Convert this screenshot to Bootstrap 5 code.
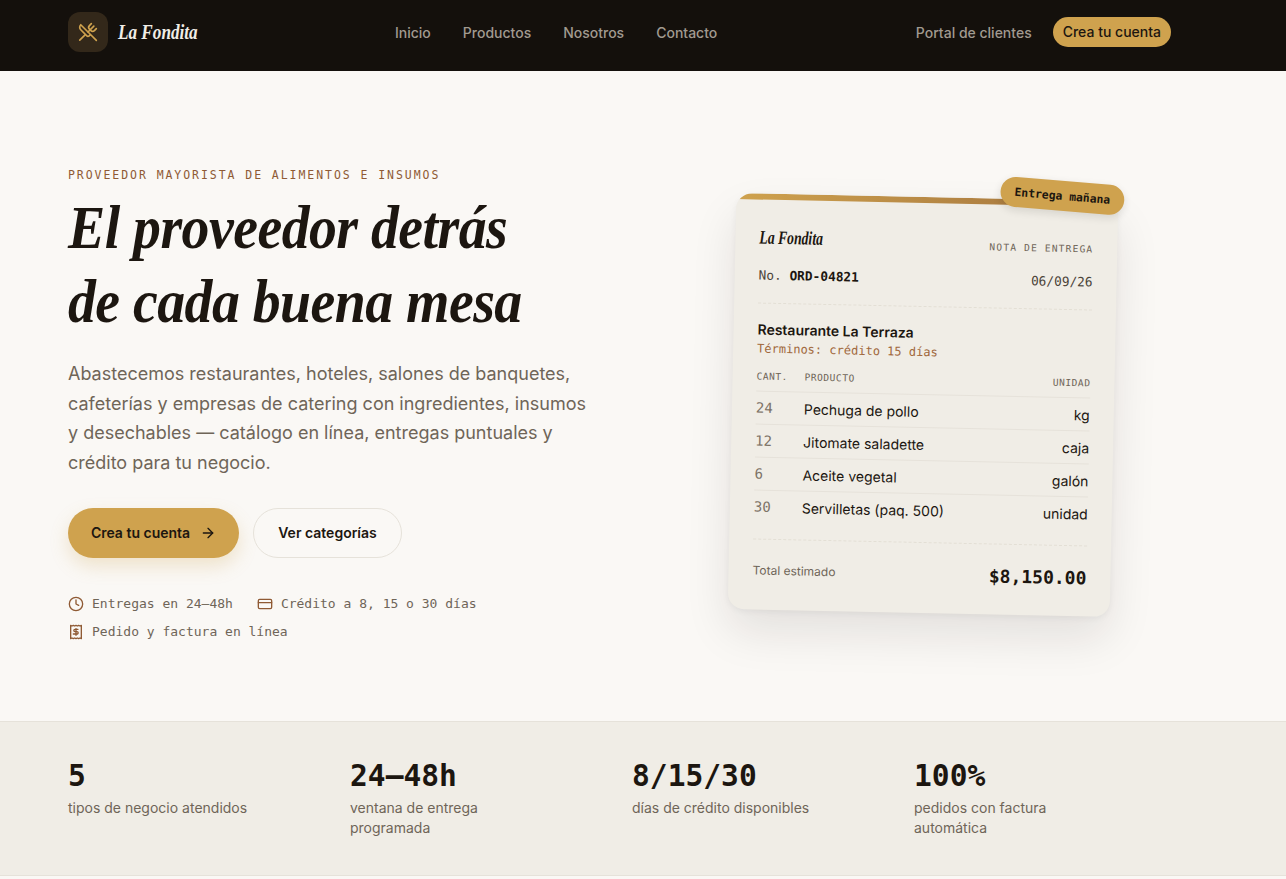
<!doctype html>
<html lang="es">
<head>
<meta charset="utf-8">
<link href="https://cdn.jsdelivr.net/npm/bootstrap@5.3.0/dist/css/bootstrap.min.css" rel="stylesheet">
<style>
body{background:#faf8f5;color:#1c1610;font-family:Inter,"Liberation Sans",sans-serif;}
.hand{font-family:"Liberation Serif",serif;font-style:italic;font-weight:700;display:inline-block;transform-origin:left center;}
.mono{font-family:"DejaVu Sans Mono","Liberation Mono",monospace;}
.topbar{background:#14100c;height:71px;padding:0 115px 7px 68px;}
.logo-box{width:40px;height:40px;border-radius:12px;background:#33281a;color:#cfa24e;}
.logo-name{color:#f0ede6;font-size:22px;line-height:1;margin-left:10px;transform:scaleX(.78);width:78px;white-space:nowrap;}
.top-links{gap:32px;margin-left:199px;}
.top-links a{color:#a19a90;font-size:14px;font-weight:500;text-decoration:none;}
.portal{color:#a19a90;font-size:14px;font-weight:500;text-decoration:none;}
.pill-small{background:#cfa24e;color:#1c1610;font-size:14px;font-weight:500;border-radius:15px;padding:0 10px;height:30px;line-height:30px;margin-left:21px;text-decoration:none;}
.hero-wrap{height:650px;padding-left:68px;position:relative;}
.hero-left{width:560px;padding-top:96px;}
.eyebrow{font-size:11.5px;letter-spacing:1.94px;color:#8f5a34;line-height:16px;margin:0;}
.hero-title{display:block;font-size:62px;line-height:74px;margin:7px 0 0;letter-spacing:-.6px;white-space:nowrap;transform:scaleX(.9);}
.hero-text{font-size:18px;line-height:29.7px;color:#6f6558;margin:21px 0 0;width:530px;}
.cta{background:#cfa24e;color:#1c1610;font-size:14px;font-weight:600;border-radius:25px;height:50px;width:171px;box-shadow:0 8px 18px rgba(207,162,78,.25);text-decoration:none;gap:10px;}
.ghost{color:#1c1610;border:1px solid #e6e2da;font-size:14px;font-weight:600;border-radius:25px;height:50px;width:149px;text-decoration:none;}
.cta-row{gap:14px;margin-top:30px;}
.facts{font-size:13px;color:#6f6558;margin-top:36px;row-gap:8px;column-gap:24px;width:500px;line-height:20px;}
.facts span.fi{gap:8px;}
.facts svg{color:#8f5a34;}
.note{position:absolute;left:732px;top:126px;width:382px;height:416px;background:#f0ede6;border-radius:16px;transform:rotate(1.2deg);box-shadow:0 22px 45px rgba(28,22,16,.1),0 2px 6px rgba(28,22,16,.05);padding:32px 24px 0;}
.note-stripe{position:absolute;left:0;right:0;top:0;height:16px;border-radius:16px 16px 0 0;border-top:6px solid transparent;border-image:linear-gradient(90deg,#cfa24e,#a0703c) 1;clip-path:inset(0 round 16px 16px 0 0);}
.stamp{position:absolute;right:-6px;top:-19px;transform:rotate(3.6deg);background:#cfa24e;color:#1c1610;font-size:11.4px;font-weight:700;border-radius:15px;padding:7.5px 14px;line-height:15px;box-shadow:0 3px 8px rgba(28,22,16,.12);}
.note-brand{font-size:19px;line-height:24px;transform:scaleX(.72);white-space:nowrap;width:66px;}
.note-kind{font-size:9.6px;letter-spacing:1.15px;color:#6f6558;}
.note-no{font-size:12.8px;color:#4b4338;margin-top:16px;}
.note-no b{color:#1c1610;font-weight:700;}
.note-sep{border-top:1px dashed #e3dfd5;margin:18px 0 0;}
.client{font-size:14px;font-weight:600;margin-top:16px;line-height:20px;}
.terms{font-size:12px;color:#a0683c;line-height:18px;}
.cols{font-size:9.6px;letter-spacing:.5px;color:#6f6558;margin-top:12px;height:21px;}
.col-q{width:48px;}
.line-row{height:33px;border-top:1px solid #e6e2da;font-size:14px;align-items:center;}
.line-row .col-q{font-size:14px;color:#7d7366;}
.total-lbl{font-size:12px;color:#6f6558;}
.total-val{font-size:18px;font-weight:700;margin-top:2px;}
.stats{background:#f0ede6;border-top:1px solid #e6e2da;border-bottom:1px solid #e6e2da;height:155px;padding:34px 0 0 68px;display:grid;grid-template-columns:repeat(4,282px);}
.stat-num{font-size:29.6px;line-height:40px;font-weight:700;margin-bottom:2px;}
.stat-txt{font-size:14px;line-height:20px;color:#6f6558;width:190px;}
</style>
</head>
<body>
<nav class="topbar d-flex align-items-center">
  <div class="logo-box d-flex align-items-center justify-content-center">
    <svg width="20" height="20" viewBox="0 0 24 24" fill="none" stroke="currentColor" stroke-width="2" stroke-linecap="round" stroke-linejoin="round"><path d="m16 2-2.3 2.3a3 3 0 0 0 0 4.2l1.8 1.8a3 3 0 0 0 4.2 0L22 8"/><path d="M15 15 3.3 3.3a4.2 4.2 0 0 0 0 6l7.3 7.3c.7.7 2 .7 2.8 0L15 15Zm0 0 7 7"/><path d="m2.1 21.8 6.4-6.3"/><path d="m19 5-7 7"/></svg>
  </div>
  <span class="hand logo-name">La Fondita</span>
  <div class="top-links d-flex"><a href="#">Inicio</a><a href="#">Productos</a><a href="#">Nosotros</a><a href="#">Contacto</a></div>
  <a class="portal ms-auto" href="#">Portal de clientes</a>
  <a class="pill-small" href="#">Crea tu cuenta</a>
</nav>
<main class="hero-wrap">
  <div class="hero-left">
    <p class="eyebrow mono">PROVEEDOR MAYORISTA DE ALIMENTOS E INSUMOS</p>
    <h1 class="hero-title hand">El proveedor detrás<br>de cada buena mesa</h1>
    <p class="hero-text">Abastecemos restaurantes, hoteles, salones de banquetes, cafeterías y empresas de catering con ingredientes, insumos y desechables — catálogo en línea, entregas puntuales y crédito para tu negocio.</p>
    <div class="cta-row d-flex">
      <a class="cta d-flex align-items-center justify-content-center" href="#">Crea tu cuenta
        <svg width="16" height="16" viewBox="0 0 24 24" fill="none" stroke="currentColor" stroke-width="2" stroke-linecap="round" stroke-linejoin="round"><path d="M5 12h14"/><path d="m12 5 7 7-7 7"/></svg></a>
      <a class="ghost d-flex align-items-center justify-content-center" href="#">Ver categorías</a>
    </div>
    <div class="facts mono d-flex flex-wrap">
      <span class="fi d-flex align-items-center"><svg width="16" height="16" viewBox="0 0 24 24" fill="none" stroke="currentColor" stroke-width="2" stroke-linecap="round" stroke-linejoin="round"><circle cx="12" cy="12" r="10"/><path d="M12 6v6l4 2"/></svg>Entregas en 24–48h</span>
      <span class="fi d-flex align-items-center"><svg width="16" height="16" viewBox="0 0 24 24" fill="none" stroke="currentColor" stroke-width="2" stroke-linecap="round" stroke-linejoin="round"><rect x="2" y="5" width="20" height="14" rx="2"/><path d="M2 10h20"/></svg>Crédito a 8, 15 o 30 días</span>
      <span class="fi d-flex align-items-center w-100"><svg width="16" height="16" viewBox="0 0 24 24" fill="none" stroke="currentColor" stroke-width="2" stroke-linecap="round" stroke-linejoin="round"><path d="M4 2v20l2-1 2 1 2-1 2 1 2-1 2 1 2-1 2 1V2l-2 1-2-1-2 1-2-1-2 1-2-1-2 1Z"/><path d="M15 8h-4.5a1.75 1.75 0 0 0 0 3.5h3a1.75 1.75 0 0 1 0 3.5H8"/><path d="M12 17V7"/></svg>Pedido y factura en línea</span>
    </div>
  </div>
  <section class="note">
    <div class="note-stripe"></div>
    <div class="stamp mono">Entrega mañana</div>
    <div class="d-flex justify-content-between align-items-end"><span class="note-brand hand">La Fondita</span><span class="note-kind mono">NOTA DE ENTREGA</span></div>
    <div class="d-flex justify-content-between note-no mono"><span>No. <b>ORD-04821</b></span><span>06/09/26</span></div>
    <div class="note-sep"></div>
    <div class="client">Restaurante La Terraza</div>
    <div class="terms mono">Términos: crédito 15 días</div>
    <div class="cols mono d-flex"><span class="col-q">CANT.</span><span>PRODUCTO</span><span class="ms-auto">UNIDAD</span></div>
    <div class="line-row d-flex"><span class="col-q mono">24</span><span>Pechuga de pollo</span><span class="ms-auto">kg</span></div>
    <div class="line-row d-flex"><span class="col-q mono">12</span><span>Jitomate saladette</span><span class="ms-auto">caja</span></div>
    <div class="line-row d-flex"><span class="col-q mono">6</span><span>Aceite vegetal</span><span class="ms-auto">galón</span></div>
    <div class="line-row d-flex"><span class="col-q mono">30</span><span>Servilletas (paq. 500)</span><span class="ms-auto">unidad</span></div>
    <div class="note-sep mt-3"></div>
    <div class="d-flex justify-content-between align-items-center mt-3"><span class="total-lbl">Total estimado</span><span class="total-val mono">$8,150.00</span></div>
  </section>
</main>
<section class="stats">
  <div><div class="stat-num mono">5</div><div class="stat-txt">tipos de negocio atendidos</div></div>
  <div><div class="stat-num mono">24–48h</div><div class="stat-txt">ventana de entrega programada</div></div>
  <div><div class="stat-num mono">8/15/30</div><div class="stat-txt">días de crédito disponibles</div></div>
  <div><div class="stat-num mono">100%</div><div class="stat-txt">pedidos con factura automática</div></div>
</section>
<script src="https://cdn.jsdelivr.net/npm/bootstrap@5.3.0/dist/js/bootstrap.bundle.min.js"></script>
</body>
</html>
